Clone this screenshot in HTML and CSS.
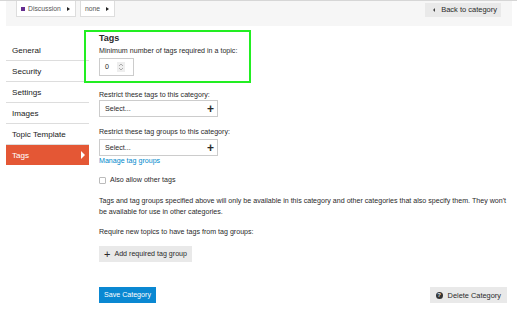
FILE: index.html
```html
<!DOCTYPE html>
<html>
<head>
<meta charset="utf-8">
<link rel="stylesheet" href="styles.css">
</head>
<body>
<div class="page">
  <div class="topbar">
    <div class="crumbs">
      <div class="crumb"><span class="swatch"></span>Discussion<span class="caret"></span></div>
      <div class="crumb">none<span class="caret"></span></div>
    </div>
    <div class="back"><span class="lcaret"></span>Back to category</div>
  </div>
  <div class="main">
    <ul class="nav">
      <li>General</li>
      <li>Security</li>
      <li>Settings</li>
      <li>Images</li>
      <li>Topic Template</li>
      <li class="active">Tags<span class="rcaret"></span></li>
    </ul>
    <div class="content">
      <div class="highlight"></div>
      <h3 class="title">Tags</h3>
      <label class="lbl">Minimum number of tags required in a topic:</label>
      <div class="num"><span class="val">0</span><span class="spin"><svg width="6" height="8" viewBox="0 0 6 8"><path d="M1 3 L3 1 L5 3 M1 5 L3 7 L5 5" fill="none" stroke="#999" stroke-width="0.8"/></svg></span></div>
      <label class="lbl l2">Restrict these tags to this category:</label>
      <div class="select"><span>Select...</span><span class="plus">+</span></div>
      <label class="lbl l3">Restrict these tag groups to this category:</label>
      <div class="select s2"><span>Select...</span><span class="plus">+</span></div>
      <a class="link">Manage tag groups</a>
      <div class="check"><span class="box"></span>Also allow other tags</div>
      <p class="para">Tags and tag groups specified above will only be available in this category and other categories that also specify them. They won't be available for use in other categories.</p>
      <p class="req">Require new topics to have tags from tag groups:</p>
      <div class="btn add"><span class="addplus">+</span>Add required tag group</div>
      <div class="footer">
        <div class="btn save">Save Category</div>
        <div class="btn del"><span class="qicon">?</span>Delete Category</div>
      </div>
    </div>
  </div>
</div>
</body>
</html>
```
FILE: styles.css
```css
html, body { margin: 0; padding: 0; background: #fff; }
body {
  font-family: "Liberation Sans", Arial, sans-serif;
  font-size: 7.1px;
  color: #2a2a2a;
  border-top: 1px solid #d6d6d6;
}
.page { padding: 0 5px 0 6px; }
.topbar {
  background: #f6f6f6;
  height: 25px;
  display: flex;
  justify-content: space-between;
  align-items: flex-start;
  padding: 0 10px;
}
.crumbs { display: flex; gap: 4px; }
.crumb {
  background: #fff;
  border: 1px solid #ddd;
  border-top: none;
  height: 15px;
  line-height: 15px;
  padding: 0 5px 0 4px;
  display: flex;
  align-items: center;
  color: #555;
  font-size: 6.8px;
}
.swatch { width: 4px; height: 4px; background: #652d90; margin-right: 3px; }
.caret {
  width: 0; height: 0;
  border-left: 3px solid #222;
  border-top: 2px solid transparent;
  border-bottom: 2px solid transparent;
  margin-left: 6px;
}
.back {
  margin-top: 2px;
  margin-right: 1px;
  background: #e9e9e9;
  height: 14px;
  line-height: 14px;
  padding: 0 4px 0 8px;
  display: flex;
  align-items: center;
  font-size: 7.5px;
}
.lcaret {
  width: 0; height: 0;
  border-right: 2px solid #444;
  border-top: 2px solid transparent;
  border-bottom: 2px solid transparent;
  margin-right: 6px;
}
.main { display: flex; gap: 10px; }
.nav {
  list-style: none;
  margin: 14px 0 0 0;
  padding: 0;
  width: 83px;
  flex: none;
}
.nav li {
  height: 20px;
  line-height: 21px;
  border-bottom: 1px solid #ddd;
  padding-left: 6px;
  font-size: 8.1px;
  color: #222;
}
.nav li.active {
  background: #e45735;
  color: #fff;
  border-bottom: none;
  display: flex;
  justify-content: space-between;
  align-items: center;
  padding-right: 4px;
}
.rcaret {
  width: 0; height: 0;
  border-left: 4px solid #fff;
  border-top: 4px solid transparent;
  border-bottom: 4px solid transparent;
}
.content { flex: 1; position: relative; padding-top: 6px; }
.highlight {
  position: absolute;
  left: -15px; top: 4px;
  width: 163px; height: 49px;
  border: 2px solid #22ee22;
}
.title { margin: 0; font-size: 9px; font-weight: bold; line-height: 12px; }
.lbl { display: block; line-height: 10px; margin-top: 2px; }
.num {
  margin-top: 2px;
  border: 1px solid #ccc;
  display: flex; align-items: center; justify-content: space-between;
  padding: 0 8px 0 5px;
  box-sizing: border-box;
  width: 35px; height: 18px;
}
.spin { display: flex; align-items: center; background: #eee; height: 10px; padding: 0 1px; }
.l2 { margin-top: 14px; }
.select {
  width: 119px; height: 17px;
  box-sizing: border-box;
  border: 1px solid #ccc;
  display: flex; align-items: center; justify-content: space-between;
  padding: 0 3px 0 5px;
}
.plus { font-size: 12px; font-weight: bold; line-height: 10px; }
.l3 { margin-top: 10px; }
.s2 { margin-top: 2px; }
.link { display: block; color: #0088cc; line-height: 10px; margin-top: 0; }
.check { display: flex; align-items: center; margin-top: 9px; line-height: 10px; }
.box { width: 5px; height: 5px; border: 1px solid #bbb; border-radius: 1px; margin-right: 4px; }
.para { margin: 11px 0 0 0; line-height: 11px; padding-right: 2px; }
.req { margin: 9px 0 0 0; line-height: 10px; }
.btn {
  display: inline-flex; align-items: center;
  height: 16px; padding: 0 6px;
  background: #e9e9e9;
}
.add { margin-top: 9px; padding: 0 5px; }
.addplus { font-size: 11px; margin-right: 4px; line-height: 10px; }
.footer { display: flex; justify-content: space-between; margin-top: 25px; padding-right: 5px; }
.save { background: #0a88d2; color: #fff; padding: 0 5px; }
.del { padding: 0 6px 0 6px; font-size: 7.4px; }
.qicon {
  width: 7px; height: 7px; border-radius: 50%;
  background: #333; color: #e9e9e9;
  font-size: 6px; font-weight: bold; line-height: 7px; text-align: center;
  margin-right: 5px;
}
```
